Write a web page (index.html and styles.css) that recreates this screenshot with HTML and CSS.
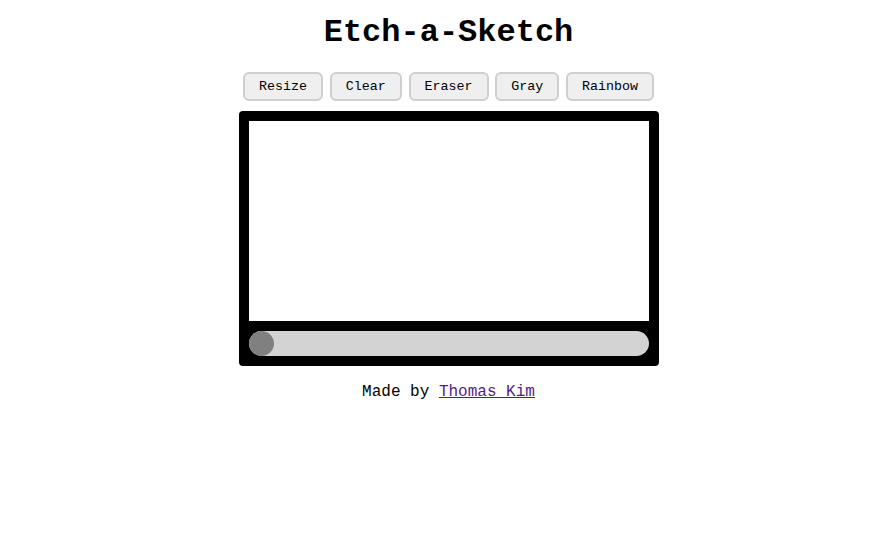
FILE: index.html
```html
<!DOCTYPE html>
<html lang="en">
<head>
<meta charset="utf-8">
<title>Etch-a-Sketch</title>
<link rel="stylesheet" href="styles.css">
</head>
<body>
<main class="page">
  <h1 class="title">Etch-a-Sketch</h1>
  <div class="controls">
    <button class="btn">Resize</button>
    <button class="btn">Clear</button>
    <button class="btn">Eraser</button>
    <button class="btn">Gray</button>
    <button class="btn">Rainbow</button>
  </div>
  <div class="frame">
    <div class="board"></div>
    <input class="slider" type="range" min="1" max="100" value="1">
  </div>
  <p class="footer">Made by <a class="link" href="#">Thomas Kim</a></p>
</main>
</body>
</html>
```
FILE: styles.css
```css
html, body {
  margin: 0;
  padding: 0;
  background: #fff;
}
.page {
  display: flex;
  flex-direction: column;
  align-items: center;
  padding-left: 16px;
  font-family: "Liberation Mono", "Courier New", monospace;
  color: #000;
}
.title {
  font-size: 32px;
  font-weight: bold;
  line-height: 36px;
  margin: 15px 0 21px;
}
.controls {
  display: flex;
  gap: 6.75px;
  margin-bottom: 10px;
}
.btn {
  font-family: "Liberation Mono", "Courier New", monospace;
  font-size: 13.333px;
  line-height: 15px;
  padding: 5px 14px;
  background: #efefef;
  border: 2px solid #cfcfcf;
  border-radius: 6px;
  color: #000;
}
.frame {
  display: flex;
  flex-direction: column;
  gap: 10px;
  width: 400px;
  padding: 10px;
  background: #000;
  border-radius: 4px;
}
.board {
  width: 400px;
  height: 200px;
  background: #fff;
}
.slider {
  -webkit-appearance: none;
  appearance: none;
  width: 400px;
  height: 25px;
  margin: 0;
  background: #d3d3d3;
  border-radius: 13px;
  outline: none;
}
.slider::-webkit-slider-thumb {
  -webkit-appearance: none;
  appearance: none;
  width: 25px;
  height: 25px;
  border-radius: 50%;
  background: #808080;
  border: none;
}
.slider::-moz-range-thumb {
  width: 25px;
  height: 25px;
  border-radius: 50%;
  background: #808080;
  border: none;
}
.footer {
  font-size: 16px;
  line-height: 18px;
  margin: 17px 0 0;
}
.link {
  color: #551a8b;
}
```
